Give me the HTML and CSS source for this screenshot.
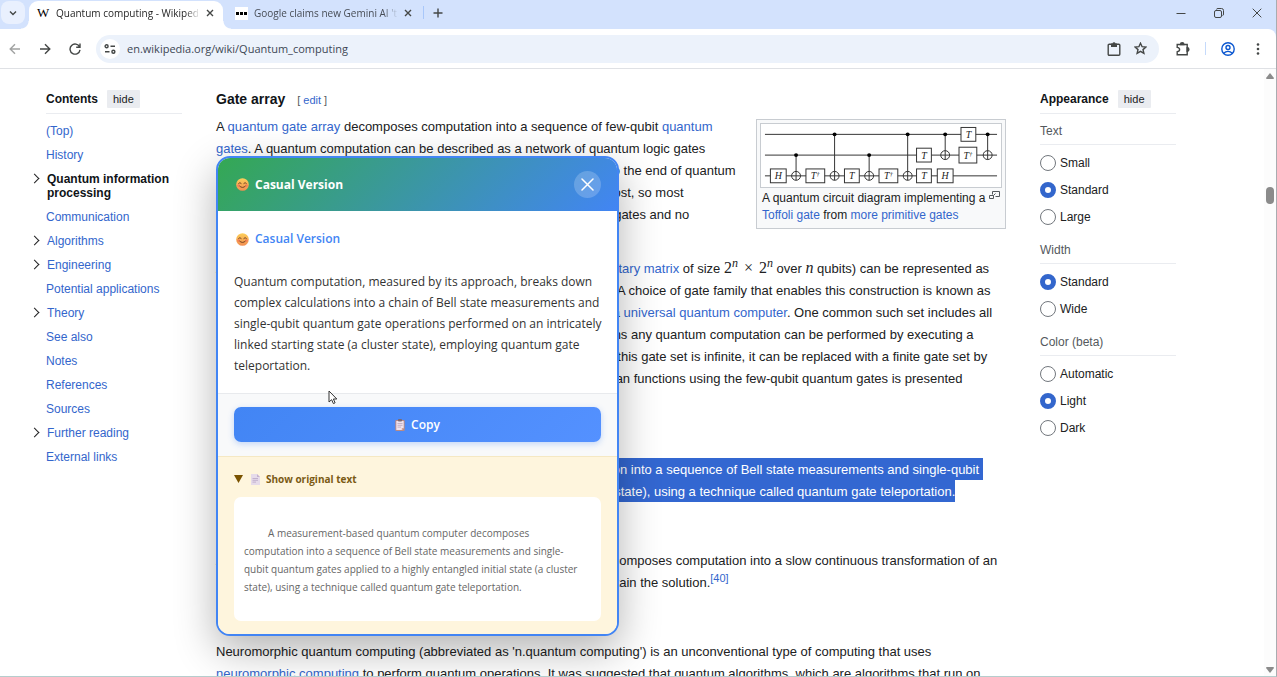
FILE: index.html
```html
<!DOCTYPE html>
<html lang="en">
<head>
    <meta charset="UTF-8">
    <meta name="viewport" content="width=device-width, initial-scale=1.0">
    <title>Quantum computing - Wikipedia</title>
    <link rel="stylesheet" href="styles.css">
</head>
<body>
<div class="browser">
    <header class="tab-strip">
        <button class="tab-search" aria-label="Search tabs">
            <svg width="10" height="10" viewBox="0 0 10 10"><path d="M2 3.5 5 6.5 8 3.5"/></svg>
        </button>
        <div class="tab tab-active">
            <span class="favicon-w">W</span>
            <span class="tab-title">Quantum computing - Wikiped</span>
            <button class="tab-close" aria-label="Close tab">
                <svg width="8" height="8" viewBox="0 0 8 8"><path d="M1 1 7 7M7 1 1 7"/></svg>
            </button>
        </div>
        <div class="tab">
            <span class="favicon-dots"><i></i><i></i><i></i></span>
            <span class="tab-title">Google claims new Gemini AI 't</span>
            <button class="tab-close" aria-label="Close tab">
                <svg width="8" height="8" viewBox="0 0 8 8"><path d="M1 1 7 7M7 1 1 7"/></svg>
            </button>
        </div>
        <span class="strip-divider"></span>
        <button class="tab-new" aria-label="New tab">
            <svg width="10" height="10" viewBox="0 0 10 10"><path d="M5 .5V9.500M.5 5H9.500"/></svg>
        </button>
        <div class="window-buttons">
            <button aria-label="Minimize"><svg width="10" height="10" viewBox="0 0 10 10"><path d="M.5 5.500H9.500"/></svg></button>
            <button aria-label="Restore"><svg width="10" height="10" viewBox="0 0 10 10"><rect x=".5" y="2.500" width="7" height="7" rx="1.500"/><path d="M2.500 1.500Q2.500.5 4 .5H7.500Q9.500.5 9.500 2.500V6Q9.500 7.500 8.500 7.500"/></svg></button>
            <button aria-label="Close"><svg width="10" height="10" viewBox="0 0 10 10"><path d="M.7.7 9.300 9.300M9.300.7.7 9.300"/></svg></button>
        </div>
    </header>

    <nav class="toolbar">
        <button class="faded" aria-label="Back">
            <svg width="12" height="12" viewBox="0 0 12 12"><path d="M11 6H1.500M6 1.200 1.200 6 6 10.800"/></svg>
        </button>
        <button aria-label="Forward">
            <svg width="12" height="12" viewBox="0 0 12 12"><path d="M1 6H10.500M6 1.200 10.800 6 6 10.800"/></svg>
        </button>
        <button aria-label="Reload">
            <svg width="12" height="12" viewBox="0 0 12 12"><path d="M10.600 4A5 5 0 1 0 11 6.800M11 .6V4.300H7.200"/></svg>
        </button>
        <div class="address">
            <button class="site-info" aria-label="Site information">
                <svg width="12" height="10" viewBox="0 0 12 10"><circle cx="2.600" cy="2.300" r="1.500"/><path d="M6.500 2.300H11M1 7.700H5.500"/><circle cx="9.400" cy="7.700" r="1.500"/></svg>
            </button>
            <input type="text" aria-label="Address" value="en.wikipedia.org/wiki/Quantum_computing">
            <button aria-label="Clipboard">
                <svg width="14" height="14" viewBox="0 0 14 14"><rect x="1.200" y="2.200" width="11.600" height="11" rx="1"/><path d="M4 1.500H10V5H4Z" fill="#444746" stroke="none"/><circle cx="7" cy="1.600" r="1.400" fill="#444746" stroke="none"/></svg>
            </button>
            <button aria-label="Bookmark this tab">
                <svg width="13" height="13" viewBox="0 0 13 13"><path d="M6.500 1.200 8.100 4.700 11.900 5.100 9 7.600 9.900 11.400 6.500 9.400 3.100 11.400 4 7.600 1.100 5.100 4.900 4.700Z"/></svg>
            </button>
        </div>
        <button class="extensions" aria-label="Extensions">
            <svg width="15" height="14" viewBox="0 0 15 14"><path d="M1.200 2.500H11.200V12.700H1.200V9.800Q3.600 9.500 3.600 7.600T1.200 5.400Z"/><path d="M4.500 2.500A1.700 1.700 0 0 1 7.900 2.500ZM11.200 5.800A1.700 1.700 0 0 1 11.200 9.200Z" fill="#444746" stroke="#444746"/></svg>
        </button>
        <span class="toolbar-divider"></span>
        <button class="profile" aria-label="Profile">
            <svg width="14" height="14" viewBox="0 0 14 14"><circle cx="7" cy="7" r="6.200"/><circle cx="7" cy="5.500" r="2"/><path d="M2.800 11.300Q4.500 9.400 7 9.400T11.200 11.300"/></svg>
        </button>
        <button class="kebab" aria-label="Menu">
            <svg width="4" height="12" viewBox="0 0 4 12"><circle cx="2" cy="1.500" r="1.300"/><circle cx="2" cy="6" r="1.300"/><circle cx="2" cy="10.500" r="1.300"/></svg>
        </button>
    </nav>

    <div class="viewport">
        <div class="page">
            <aside class="contents">
                <div class="side-head">
                    <h2>Contents</h2>
                    <button class="hide-button">hide</button>
                </div>
                <ul>
                    <li><a href="#top">(Top)</a></li>
                    <li><a href="#history">History</a></li>
                    <li class="expandable current"><a href="#qip">Quantum information processing</a></li>
                    <li><a href="#communication">Communication</a></li>
                    <li class="expandable"><a href="#algorithms">Algorithms</a></li>
                    <li class="expandable"><a href="#engineering">Engineering</a></li>
                    <li><a href="#applications">Potential applications</a></li>
                    <li class="expandable"><a href="#theory">Theory</a></li>
                    <li><a href="#see-also">See also</a></li>
                    <li><a href="#notes">Notes</a></li>
                    <li><a href="#references">References</a></li>
                    <li><a href="#sources">Sources</a></li>
                    <li class="expandable"><a href="#further">Further reading</a></li>
                    <li><a href="#external">External links</a></li>
                </ul>
            </aside>

            <main class="article">
                <h3>Gate array <span class="edit">[ <a href="#edit">edit</a> ]</span></h3>
                <figure>
                    <svg class="circuit" viewBox="0 0 243 64" role="img" aria-label="Toffoli gate circuit">
                        <path class="wire" d="M4 10.500H239M4 31.500H239M4 52.500H239"/>
                        <path class="wire" d="M35.500 31.500V57M74.500 10.500V57M109.500 31.500V57M148.500 10.500V57M186.500 10.500V36M229.500 10.500V36"/>
                        <g class="dot">
                            <circle cx="35.500" cy="31.500" r="2"/><circle cx="74.500" cy="10.500" r="2"/><circle cx="109.500" cy="31.500" r="2"/>
                            <circle cx="148.500" cy="10.500" r="2"/><circle cx="186.500" cy="10.500" r="2"/><circle cx="229.500" cy="10.500" r="2"/>
                        </g>
                        <g class="target">
                            <circle cx="35.500" cy="52.500" r="4.500"/><circle cx="74.500" cy="52.500" r="4.500"/><circle cx="109.500" cy="52.500" r="4.500"/>
                            <circle cx="148.500" cy="52.500" r="4.500"/><circle cx="186.500" cy="31.500" r="4.500"/><circle cx="229.500" cy="31.500" r="4.500"/>
                        </g>
                        <g class="gate">
                            <rect x="9.500" y="45.500" width="16" height="14"/><rect x="45.500" y="45.500" width="19" height="14"/>
                            <rect x="84.500" y="45.500" width="15" height="14"/><rect x="119.500" y="45.500" width="19" height="14"/>
                            <rect x="157.500" y="45.500" width="15" height="14"/><rect x="178.500" y="45.500" width="16" height="14"/>
                            <rect x="157.500" y="24.500" width="15" height="14"/><rect x="200.500" y="23.500" width="18" height="16"/>
                            <rect x="202.500" y="3.500" width="15" height="14"/>
                        </g>
                        <g class="gate-label">
                            <text x="17.500" y="56">H</text><text x="55" y="56">T<tspan class="dagger" dy="-3">†</tspan></text>
                            <text x="92" y="56">T</text><text x="129" y="56">T<tspan class="dagger" dy="-3">†</tspan></text>
                            <text x="165" y="56">T</text><text x="186.500" y="56">H</text>
                            <text x="165" y="35">T</text><text x="209.500" y="35">T<tspan class="dagger" dy="-3">†</tspan></text>
                            <text x="210" y="14">T</text>
                        </g>
                    </svg>
                    <figcaption>
                        <span>A quantum circuit diagram implementing a <a href="#toffoli">Toffoli gate</a> from <a href="#gates">more primitive gates</a></span>
                        <svg class="magnify" width="11" height="9" viewBox="0 0 11 9"><path d="M3.500 3.500V.5H10.500V5.500H6.500M.5 4.500H4.500V7.500H.5ZM4.500 4.500 6.500 2.500"/></svg>
                    </figcaption>
                </figure>
                <p>A <a href="#gate-array">quantum gate array</a> decomposes computation into a sequence of few-qubit <a href="#gate">quantum<br>
                    gates</a>. A quantum computation can be described as a network of quantum logic gates<br>
                    and of measurements. However, any measurement can be deferred to the end of quantum<br>
                    computation, although this deferment may come at a computational cost, so most<br>
                    <a href="#circuit">quantum circuits</a> depict any network consisting only of quantum logic gates and no<br>
                    measurements.</p>
                <p>Any quantum computation (which is, if in the above formalism, any <a href="#unitary">unitary matrix</a> of size <span class="math">2<sup>n</sup><span class="times">×</span>2<sup>n</sup></span> over <i class="math">n</i> qubits) can be represented as<br>
                    a network of quantum logic gates from the fairly small family of gates. A choice of gate family that enables this construction is known as<br>
                    a <a href="#gate-set">universal gate set</a>, since any computer that can run such circuits is a <a href="#universal">universal quantum computer</a>. One common such set includes all<br>
                    single-qubit gates as well as the CNOT gates (from above). This means any quantum computation can be performed by executing a<br>
                    sequence of single-qubit gates together with all CNOT gates. Though this gate set is infinite, it can be replaced with a finite gate set by<br>
                    appealing to the Solovay-Kitaev theorem. An implementation of Boolean functions using the few-qubit quantum gates is presented<br>
                    here.</p>
                <h3>Measurement-based quantum computing</h3>
                <p><span class="selected">A measurement-based quantum computer decomposes its computation into a sequence of Bell state measurements and single-qubit&nbsp;<br>
                    quantum gates as applied to a highly entangled initial state (a cluster state), using a technique called quantum gate teleportation.</span></p>
                <h3>Adiabatic quantum computing</h3>
                <p>An adiabatic quantum computer, as based on quantum annealing, decomposes computation into a slow continuous transformation of an<br>
                    initial Hamiltonian into the final Hamiltonian, whose ground states contain the solution.<sup class="cite"><a href="#cite-40">[40]</a></sup></p>
                <h3>Neuromorphic quantum computing</h3>
                <p>Neuromorphic quantum computing (abbreviated as 'n.quantum computing') is an unconventional type of computing that uses<br>
                    <a href="#neuromorphic">neuromorphic computing</a> to perform quantum operations. It was suggested that quantum algorithms, which are algorithms that run on</p>
            </main>

            <aside class="appearance">
                <div class="side-head">
                    <h2>Appearance</h2>
                    <button class="hide-button">hide</button>
                </div>
                <fieldset>
                    <legend>Text</legend>
                    <label><input type="radio" name="text"> Small</label>
                    <label><input type="radio" name="text" checked> Standard</label>
                    <label><input type="radio" name="text"> Large</label>
                </fieldset>
                <fieldset>
                    <legend>Width</legend>
                    <label><input type="radio" name="width" checked> Standard</label>
                    <label><input type="radio" name="width"> Wide</label>
                </fieldset>
                <fieldset>
                    <legend>Color (beta)</legend>
                    <label><input type="radio" name="color"> Automatic</label>
                    <label><input type="radio" name="color" checked> Light</label>
                    <label><input type="radio" name="color"> Dark</label>
                </fieldset>
            </aside>
        </div>

        <div class="scrollbar">
            <svg width="8" height="6" viewBox="0 0 8 6"><path d="M4 0 8 5Q8 6 7 6H1Q0 6 0 5Z"/></svg>
            <div class="track"><div class="thumb"></div></div>
            <svg width="8" height="6" viewBox="0 0 8 6"><path d="M4 6 0 1Q0 0 1 0H7Q8 0 8 1Z"/></svg>
        </div>

        <section class="popup">
            <header class="popup-head">
                <svg class="smile" viewBox="0 0 14 14"><use href="#smile"/></svg>
                <h2>Casual Version</h2>
                <button class="popup-close" aria-label="Close">
                    <svg width="13" height="13" viewBox="0 0 13 13"><path d="M1 1 12 12M12 1 1 12"/></svg>
                </button>
            </header>
            <div class="popup-body">
                <h3><svg class="smile" viewBox="0 0 14 14"><use href="#smile"/></svg> Casual Version</h3>
                <p>Quantum computation, measured by its approach, breaks down<br>
                    complex calculations into a chain of Bell state measurements and<br>
                    single-qubit quantum gate operations performed on an intricately<br>
                    linked starting state (a cluster state), employing quantum gate<br>
                    teleportation.</p>
            </div>
            <div class="popup-actions">
                <button class="copy-button">
                    <svg width="10" height="12" viewBox="0 0 10 12"><rect x=".3" y="1" width="9.400" height="11" rx="1" fill="#b98a86"/><path d="M1.300 2H8.700V9L6.800 11H1.300Z" fill="#efe2ee"/><path d="M8.700 9H6.800V11Z" fill="#d8a48f"/><rect x="3" y="0" width="4" height="2.500" rx=".8" fill="#7b6a75"/><path d="M2.500 4.500H7.500M2.500 6.300H7.500M2.500 8.100H6" stroke="#b9a5bd" stroke-width=".8"/></svg>
                    Copy
                </button>
            </div>
            <details class="original" open>
                <summary>
                    <svg width="9" height="8" viewBox="0 0 9 8"><path d="M0 0H9L4.500 8Z" fill="#7a5300"/></svg>
                    <svg class="doc" width="9" height="11" viewBox="0 0 9 11"><path d="M0 0H6L9 3V11H0Z" fill="#e6dbea"/><path d="M6 0V3H9Z" fill="#c5b2d0"/><path d="M1.500 4.500H7M1.500 6.300H7M1.500 8.100H5" stroke="#b8a6c6" stroke-width=".8"/></svg>
                    <span>Show original text</span>
                </summary>
                <blockquote>A measurement-based quantum computer decomposes<br>
                    computation into a sequence of Bell state measurements and single-<br>
                    qubit quantum gates applied to a highly entangled initial state (a cluster<br>
                    state), using a technique called quantum gate teleportation.</blockquote>
            </details>
        </section>

        <svg class="cursor" width="10" height="15" viewBox="0 0 10 15"><path d="M1 1V12L3.600 9.700 5.400 13.600 7.100 12.800 5.400 9H8.800Z"/></svg>
    </div>
</div>

<svg class="sprites" aria-hidden="true">
    <defs>
        <linearGradient id="face" x1="0" y1="0" x2="0" y2="1">
            <stop offset="0" stop-color="#fdd05a"/>
            <stop offset="1" stop-color="#f28d50"/>
        </linearGradient>
        <symbol id="smile" viewBox="0 0 14 14">
            <circle cx="7" cy="7" r="6.800" fill="url(#face)"/>
            <path d="M2.800 5.800Q4.200 4 5.600 5.800M8.400 5.800Q9.800 4 11.200 5.800M3.800 8.600Q7 12 10.200 8.600" fill="none" stroke="#6b3a1e" stroke-width="1" stroke-linecap="round"/>
            <circle cx="2.700" cy="8.200" r="1.400" fill="#f4645a" opacity=".6"/>
            <circle cx="11.300" cy="8.200" r="1.400" fill="#f4645a" opacity=".6"/>
        </symbol>
    </defs>
</svg>
</body>
</html>
```
FILE: styles.css
```css
* {
    box-sizing: border-box;
}

body {
    margin: 0;
    font-family: "Liberation Sans", Arial, sans-serif;
    font-size: 13px;
    line-height: 22px;
    color: #202122;
    background-color: #fff;
}

h2, h3, p, ul, figure, fieldset, blockquote {
    margin: 0;
    padding: 0;
    border: none;
}

button {
    display: flex;
    align-items: center;
    justify-content: center;
    padding: 0;
    border: none;
    background: none;
    font-family: inherit;
    color: inherit;
    cursor: pointer;
}

svg {
    display: block;
    flex: none;
}

a {
    color: #3366cc;
    text-decoration: none;
}

.sprites {
    position: absolute;
    width: 0;
    height: 0;
}

.browser {
    display: flex;
    flex-direction: column;
    height: 100vh;
    overflow: hidden;
    border-right: 1px solid #a9acb0;
    border-bottom: 1px solid #b5cdcd;
    background-color: #d3e2fd;
}

/* tab strip */
.tab-strip {
    display: flex;
    align-items: center;
    flex: none;
    height: 29px;
    padding: 0 0 4px 1px;
    font-family: "Open Sans", sans-serif;
    font-size: 10px;
    color: #474c55;
}

.tab-strip svg, .toolbar svg {
    fill: none;
    stroke: #444746;
    stroke-width: 1.4;
}

.tab-search {
    width: 24px;
    height: 23px;
    border-radius: 8px;
    background-color: #e9f0fe;
}

.tab {
    position: relative;
    display: flex;
    align-items: center;
    gap: 8px;
    width: 194px;
    height: 28px;
    margin: 1px 0 -4px 4px;
    padding: 0 8px 4px;
}

.tab-active {
    border-radius: 9px 9px 0 0;
    background-color: #fff;
    color: #1f1f1f;
}

/* flared feet of the active tab */
.tab-active::before, .tab-active::after {
    content: "";
    position: absolute;
    bottom: 0;
    width: 8px;
    height: 8px;
}

.tab-active::before {
    left: -8px;
    background: radial-gradient(circle at 0 0, transparent 7px, #fff 8px);
}

.tab-active::after {
    right: -8px;
    background: radial-gradient(circle at 100% 0, transparent 7px, #fff 8px);
}

.tab-title {
    flex: 1;
    margin-right: -4px;
    overflow: hidden;
    white-space: nowrap;
    mask-image: linear-gradient(to right, #000 90%, transparent);
}

.tab-close {
    width: 11px;
    height: 16px;
}

.favicon-w {
    width: 11px;
    font-family: "Liberation Serif", serif;
    font-size: 13px;
    color: #000;
}

.favicon-dots {
    display: flex;
    align-items: center;
    justify-content: center;
    gap: 1px;
    width: 13px;
    height: 13px;
    margin-right: -2px;
    background-color: #fff;
}

.favicon-dots i {
    width: 3px;
    height: 3px;
    background-color: #000;
}

.strip-divider {
    width: 1px;
    height: 13px;
    margin-left: 2px;
    background-color: #a8c7fa;
}

.tab-new {
    width: 28px;
    height: 24px;
}

.window-buttons {
    display: flex;
    margin-left: auto;
}

.window-buttons button {
    width: 38px;
    height: 24px;
}

.window-buttons svg {
    stroke-width: 1;
}

/* toolbar */
.toolbar {
    display: flex;
    align-items: center;
    flex: none;
    height: 40px;
    padding-right: 3px;
    border-bottom: 1px solid #dfe1e5;
    border-radius: 0 8px 0 0;
    background-color: #fff;
}

.toolbar > button {
    width: 30px;
    height: 28px;
}

.toolbar .faded {
    opacity: 0.5;
}

.address {
    display: flex;
    align-items: center;
    flex: 1;
    gap: 13px;
    height: 28px;
    margin-left: 6px;
    padding: 0 12px 0 4px;
    border-radius: 14px;
    background-color: #ecf2fb;
}

.address input {
    flex: 1;
    min-width: 0;
    margin-left: -6px;
    padding: 0;
    border: none;
    background: none;
    font-family: "Open Sans", sans-serif;
    font-size: 11px;
    color: #3c4754;
}

.site-info {
    width: 20px;
    height: 20px;
    border-radius: 50%;
    background-color: #fff;
}

.toolbar .extensions {
    margin-left: 9px;
}

.toolbar-divider {
    width: 1px;
    height: 13px;
    margin: 0 7px;
    background-color: #c5dafb;
}

.profile svg {
    stroke: #0b57d0;
}

.kebab svg {
    fill: #444746;
    stroke: none;
}

/* wiki page */
.viewport {
    position: relative;
    display: flex;
    flex: 1;
    min-height: 0;
    overflow: hidden;
    background-color: #fff;
}

.page {
    display: grid;
    flex: 1;
    grid-template-columns: 150px minmax(0, 1fr) 136px;
    align-items: start;
    gap: 34px;
    min-width: 0;
    padding: 16px 88px 0 32px;
}

.side-head {
    display: flex;
    align-items: center;
    gap: 9px;
    height: 29px;
    border-bottom: 1px solid #eaecf0;
}

.side-head h2 {
    font-size: 12px;
    color: #101418;
}

.hide-button {
    height: 18px;
    padding: 0 6px;
    border-radius: 1px;
    background-color: #eaecf0;
    font-size: 11px;
}

.contents {
    font-size: 12px;
    line-height: 14px;
}

.contents .side-head {
    margin-left: 14px;
}

.contents ul {
    padding-top: 5px;
    list-style: none;
}

.contents li {
    padding: 5px 0 5px 14px;
}

.expandable {
    display: flex;
}

.expandable::before {
    content: "";
    flex: none;
    width: 6px;
    height: 6px;
    margin: 3px 9px 0 -15px;
    border: solid #202122;
    border-width: 1px 1px 0 0;
    transform: rotate(45deg);
}

.current a {
    font-weight: bold;
    color: #101418;
}

.article {
    white-space: nowrap;
}

.article h3 {
    margin: 14px 0 11px;
    font-size: 14px;
    color: #101418;
}

.article h3:first-child {
    margin: 3px 0 5px;
}

.article p + p {
    margin-top: 10px;
}

.edit {
    margin-left: 8px;
    font-size: 11px;
    font-weight: normal;
    color: #54595d;
}

figure {
    float: right;
    width: 250px;
    margin-top: 3px;
    padding: 3px;
    border: 1px solid #c8ccd1;
    background-color: #f8f9fa;
}

.circuit {
    width: 100%;
    border: 1px solid #c8ccd1;
    background-color: #fff;
}

.wire, .target, .gate {
    fill: none;
    stroke: #333;
    stroke-width: 1;
}

.gate {
    fill: #fff;
}

.dot {
    fill: #000;
}

.gate-label {
    font-family: "Liberation Serif", serif;
    font-size: 10px;
    font-style: italic;
    text-anchor: middle;
    fill: #222;
}

.dagger {
    font-size: 7px;
}

figcaption {
    display: flex;
    justify-content: space-between;
    padding: 2px 2px 1px;
    font-size: 12px;
    line-height: 17px;
    white-space: normal;
}

.magnify {
    margin-top: 1px;
    fill: none;
    stroke: #54595d;
}

.math {
    font-family: "Liberation Serif", serif;
    font-size: 16px;
    line-height: 16px;
}

.times {
    margin: 0 6px;
}

sup {
    font-size: 11px;
    line-height: 0;
}

.math sup {
    font-size: 12px;
    font-style: italic;
}

.selected {
    padding: 4px 0 3px;
    background-color: #3367d1;
    color: #fff;
}

/* appearance menu */
.appearance {
    font-size: 12px;
    color: #202122;
}

fieldset {
    min-width: 0;
    margin-bottom: 12px;
}

.appearance .side-head {
    margin-bottom: 9px;
}

legend {
    width: 100%;
    margin-bottom: 4px;
    padding: 0 0 4px;
    border-bottom: 1px solid #eaecf0;
    line-height: 17px;
    color: #54595d;
}

fieldset label {
    display: flex;
    align-items: center;
    gap: 4px;
    height: 27px;
}

fieldset input {
    appearance: none;
    width: 16px;
    height: 16px;
    margin: 0;
    border: 1px solid #72777d;
    border-radius: 50%;
    background-color: #fff;
}

fieldset input:checked {
    border: 5px solid #3366cc;
}

/* scrollbar */
.scrollbar {
    display: flex;
    flex-direction: column;
    align-items: center;
    width: 12px;
    padding: 4px 0 3px;
    background-color: #fcfcfc;
}

.scrollbar svg {
    fill: #8b8b8b;
}

.track {
    flex: 1;
    padding-top: 108px;
}

.thumb {
    width: 8px;
    height: 17px;
    border-radius: 4px;
    background-color: #8b8b8b;
}

/* rewrite popup */
.popup {
    position: absolute;
    top: 87px;
    left: 216px;
    width: 403px;
    overflow: hidden;
    border: 2px solid #4285f4;
    border-radius: 14px;
    background-color: #fff;
    box-shadow: 0 14px 42px rgba(0, 0, 0, 0.3);
    font-family: "Open Sans", "Noto Sans", sans-serif;
    color: #333;
}

.popup-head {
    display: flex;
    align-items: center;
    gap: 6px;
    height: 53px;
    padding: 0 16px 0 18px;
    background: linear-gradient(135deg, #34a853 0%, #4285f4 100%);
    color: #fff;
}

.popup-head h2 {
    flex: 1;
    font-size: 12px;
    font-weight: 700;
}

.smile {
    width: 13px;
    height: 13px;
}

.popup-close {
    width: 27px;
    height: 27px;
    border-radius: 50%;
    background-color: rgba(255, 255, 255, 0.2);
}

.popup-close svg {
    fill: none;
    stroke: #fff;
    stroke-width: 1.5;
    stroke-linecap: round;
}

.popup-body {
    padding: 17px 16px;
}

.popup-body h3 {
    display: flex;
    align-items: center;
    gap: 6px;
    margin: 0 0 21px 2px;
    font-size: 12px;
    font-weight: 600;
    color: #4285f4;
}

.popup-body p {
    font-size: 12px;
    line-height: 21px;
    white-space: nowrap;
}

.popup-actions {
    padding: 13px 16px 14px;
    border-top: 1px solid #e8eaed;
    background-color: #f8f9fa;
}

.copy-button {
    gap: 6px;
    width: 100%;
    height: 35px;
    border-radius: 7px;
    background: linear-gradient(135deg, #4285f4, #5491ff);
    box-shadow: 0 2px 6px rgba(66, 133, 244, 0.3);
    font-size: 12px;
    font-weight: 600;
    color: #fff;
}

.original {
    padding: 13px 16px;
    border-top: 1px solid #f5e8c3;
    background-color: #fef5dd;
}

.original summary {
    display: flex;
    align-items: center;
    gap: 8px;
    margin-bottom: 9px;
    font-size: 10px;
    font-weight: 700;
    line-height: 18px;
    color: #7a5a14;
}

.original summary span {
    margin-left: -2px;
}

.original blockquote {
    padding: 27px 10px 25px;
    border-radius: 7px;
    background-color: #fff;
    font-size: 10px;
    line-height: 18px;
    color: #666;
    text-indent: 24px;
    white-space: nowrap;
}

.cursor {
    position: absolute;
    top: 321px;
    left: 328px;
    fill: #fff;
    stroke: #333;
}
```
